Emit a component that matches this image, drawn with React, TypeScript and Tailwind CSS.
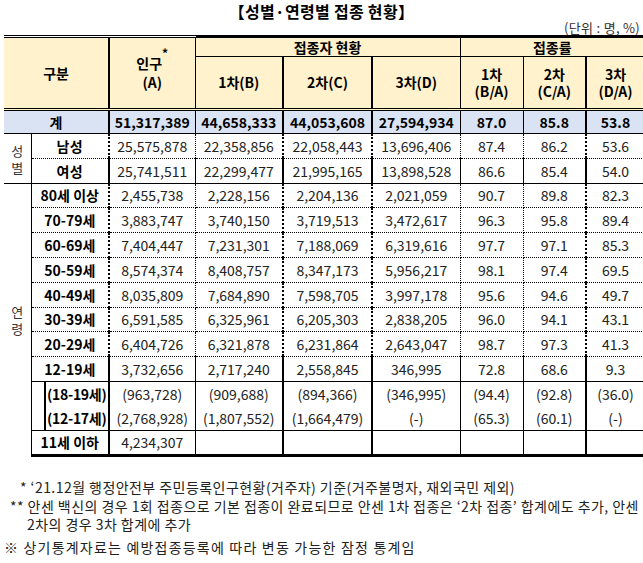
import React from "react";

const FONT = "font-['Noto_Sans_CJK_KR','Noto_Sans',sans-serif]";

const sex = [
  { label: "남성", v: ["25,575,878", "22,358,856", "22,058,443", "13,696,406", "87.4", "86.2", "53.6"] },
  { label: "여성", v: ["25,741,511", "22,299,477", "21,995,165", "13,898,528", "86.6", "85.4", "54.0"] },
];

const ages = [
  { label: "80세 이상", v: ["2,455,738", "2,228,156", "2,204,136", "2,021,059", "90.7", "89.8", "82.3"] },
  { label: "70-79세", v: ["3,883,747", "3,740,150", "3,719,513", "3,472,617", "96.3", "95.8", "89.4"] },
  { label: "60-69세", v: ["7,404,447", "7,231,301", "7,188,069", "6,319,616", "97.7", "97.1", "85.3"] },
  { label: "50-59세", v: ["8,574,374", "8,408,757", "8,347,173", "5,956,217", "98.1", "97.4", "69.5"] },
  { label: "40-49세", v: ["8,035,809", "7,684,890", "7,598,705", "3,997,178", "95.6", "94.6", "49.7"] },
  { label: "30-39세", v: ["6,591,585", "6,325,961", "6,205,303", "2,838,205", "96.0", "94.1", "43.1"] },
  { label: "20-29세", v: ["6,404,726", "6,321,878", "6,231,864", "2,643,047", "98.7", "97.3", "41.3"] },
];

const r1219 = ["3,732,656", "2,717,240", "2,558,845", "346,995", "72.8", "68.6", "9.3"];
const r1819 = ["(963,728)", "(909,688)", "(894,366)", "(346,995)", "(94.4)", "(92.8)", "(36.0)"];
const r1217 = ["(2,768,928)", "(1,807,552)", "(1,664,479)", "(-)", "(65.3)", "(60.1)", "(-)"];
const r11 = ["4,234,307", "", "", "", "", "", ""];
const total = ["51,317,389", "44,658,333", "44,053,608", "27,594,934", "87.0", "85.8", "53.8"];

const colR = [
  "border-r border-r-black",
  "border-r-2 border-r-black",
  "border-r-2 border-r-black",
  "border-r border-r-black",
  "border-r border-r-black",
  "border-r-2 border-r-black",
  "",
];

function Cells({ v, bottom, bold }: { v: string[]; bottom: string; bold?: boolean }) {
  return (
    <>
      {v.map((x, i) => (
        <td
          key={i}
          className={`${colR[i]} ${bottom} p-0 text-center whitespace-nowrap ${bold ? "font-bold text-black" : "text-[#222]"}`}
        >
          {x}
        </td>
      ))}
    </>
  );
}

const DOT = "border-b border-dotted border-b-black";
const SOLID = "border-b border-solid border-b-black";

export default function App() {
  return (
    <div className={`${FONT} w-[643px] h-[563px] overflow-hidden bg-white text-[14px] text-[#222]`}>
      <div className="pt-[1px] h-[21px] text-center text-[16px] leading-[20px] font-bold text-black tracking-[0.3px]">
        【성별·연령별 접종 현황】
      </div>
      <div className="h-[14px] pr-[3px] text-right text-[13px] leading-[14px] text-[#333] tracking-[0.3px]">(단위 : 명, %)</div>
      <table className="ml-[4px] w-[640px] table-fixed border-collapse leading-[17px]">
        <colgroup>
          <col className="w-[27px]" />
          <col className="w-[78px]" />
          <col className="w-[86px]" />
          <col className="w-[88px]" />
          <col className="w-[89px]" />
          <col className="w-[88px]" />
          <col className="w-[63px]" />
          <col className="w-[63px]" />
          <col className="w-[58px]" />
        </colgroup>
        <thead>
          <tr className="h-[20px] bg-[#fff2cc]">
            <th
              colSpan={2}
              rowSpan={2}
              className="border-t-[3px] border-t-black border-r-2 border-r-black border-b-[3px] border-double border-b-black p-0 font-bold text-black"
            >
              구분
            </th>
            <th
              rowSpan={2}
              className="border-t-[3px] border-t-black border-r border-r-black border-b-[3px] border-double border-b-black p-0 font-bold text-black"
            >
              <div className="pb-[2px]">
                인구<sup className="text-[12px] align-[5px]">*</sup>
              </div>
              <div>(A)</div>
            </th>
            <th
              colSpan={3}
              className="border-t-[3px] border-t-black border-r border-r-black border-b border-b-black p-0 font-bold text-black"
            >
              접종자 현황
            </th>
            <th colSpan={3} className="border-t-[3px] border-t-black border-b border-b-black p-0 font-bold text-black">
              접종률
            </th>
          </tr>
          <tr className="h-[53px] bg-[#fff2cc]">
            <th className="border-r-2 border-r-black border-b-[3px] border-double border-b-black p-0 font-bold text-black">1차(B)</th>
            <th className="border-r-2 border-r-black border-b-[3px] border-double border-b-black p-0 font-bold text-black">2차(C)</th>
            <th className="border-r border-r-black border-b-[3px] border-double border-b-black p-0 font-bold text-black">3차(D)</th>
            <th className="border-r border-r-black border-b-[3px] border-double border-b-black p-0 font-bold text-black">
              <div>1차</div>
              <div>(B/A)</div>
            </th>
            <th className="border-r-2 border-r-black border-b-[3px] border-double border-b-black p-0 font-bold text-black">
              <div>2차</div>
              <div>(C/A)</div>
            </th>
            <th className="border-b-[3px] border-double border-b-black p-0 font-bold text-black">
              <div>3차</div>
              <div>(D/A)</div>
            </th>
          </tr>
        </thead>
        <tbody>
          <tr className="h-[24px] bg-[#dae3f3]">
            <td colSpan={2} className={`border-r-2 border-r-black ${SOLID} p-0 text-center font-bold text-black`}>
              계
            </td>
            <Cells v={total} bottom={SOLID} bold />
          </tr>
          {sex.map((r, i) => (
            <tr key={r.label} className="h-[25px]">
              {i === 0 && (
                <td rowSpan={2} className={`border-r border-r-black ${SOLID} p-0 text-center text-[13px] leading-[17px] text-[#333]`}>
                  <div>성</div>
                  <div>별</div>
                </td>
              )}
              <td className={`border-r-2 border-r-black ${i === 0 ? DOT : SOLID} p-0 text-center font-bold text-black tracking-[0.5px]`}>
                {r.label}
              </td>
              <Cells v={r.v} bottom={i === 0 ? DOT : SOLID} />
            </tr>
          ))}
          {ages.map((r, i) => (
            <tr key={r.label} className={i === 0 || i === 5 ? "h-[24px]" : "h-[25px]"}>
              {i === 0 && (
                <td rowSpan={11} className="border-r border-r-black p-0 text-center text-[13px] leading-[17px] text-[#333]">
                  <div>연</div>
                  <div>령</div>
                </td>
              )}
              <td className={`border-r-2 border-r-black ${DOT} p-0 text-center font-bold text-black whitespace-nowrap`}>
                {r.label}
              </td>
              <Cells v={r.v} bottom={DOT} />
            </tr>
          ))}
          <tr className="h-[25px]">
            <td className={`border-r-2 border-r-black ${SOLID} p-0 text-center font-bold text-black`}>12-19세</td>
            <Cells v={r1219} bottom={SOLID} />
          </tr>
          <tr className="h-[24px]">
            <td rowSpan={2} className={`border-r-2 border-r-black ${SOLID} p-0 font-bold text-black`}>
              <div className="flex h-[48px]">
                <div className="w-[14px] shrink-0 border-r-2 border-black" />
                <div className="flex flex-1 flex-col justify-around text-center whitespace-nowrap tracking-[-0.3px]">
                  <div>(18-19세)</div>
                  <div>(12-17세)</div>
                </div>
              </div>
            </td>
            <Cells v={r1819} bottom="" />
          </tr>
          <tr className="h-[24px]">
            <Cells v={r1217} bottom={SOLID} />
          </tr>
          <tr className="h-[25px]">
            <td className="border-r-2 border-r-black border-b-[3px] border-b-black p-0 text-center font-bold text-black whitespace-nowrap">
              11세 이하
            </td>
            <Cells v={r11} bottom="border-b-[3px] border-b-black" />
          </tr>
        </tbody>
      </table>
      <div className="mt-[21px] text-[14px] leading-[18.5px] text-[#222] whitespace-nowrap tracking-[0.45px]">
        <div className="pl-[20px]">* ‘21.12월 행정안전부 주민등록인구현황(거주자) 기준(거주불명자, 재외국민 제외)</div>
        <div className="pl-[10px]">
          ** 안센 백신의 경우 1회 접종으로 기본 접종이 완료되므로 안센 1차 접종은 ‘2차 접종’ 합계에도 추가, 안센
        </div>
        <div className="pl-[27px]">2차의 경우 3차 합계에 추가</div>
        <div className="pl-[4px] pt-[4px] tracking-[1.2px]">※ 상기통계자료는 예방접종등록에 따라 변동 가능한 잠정 통계임</div>
      </div>
    </div>
  );
}
